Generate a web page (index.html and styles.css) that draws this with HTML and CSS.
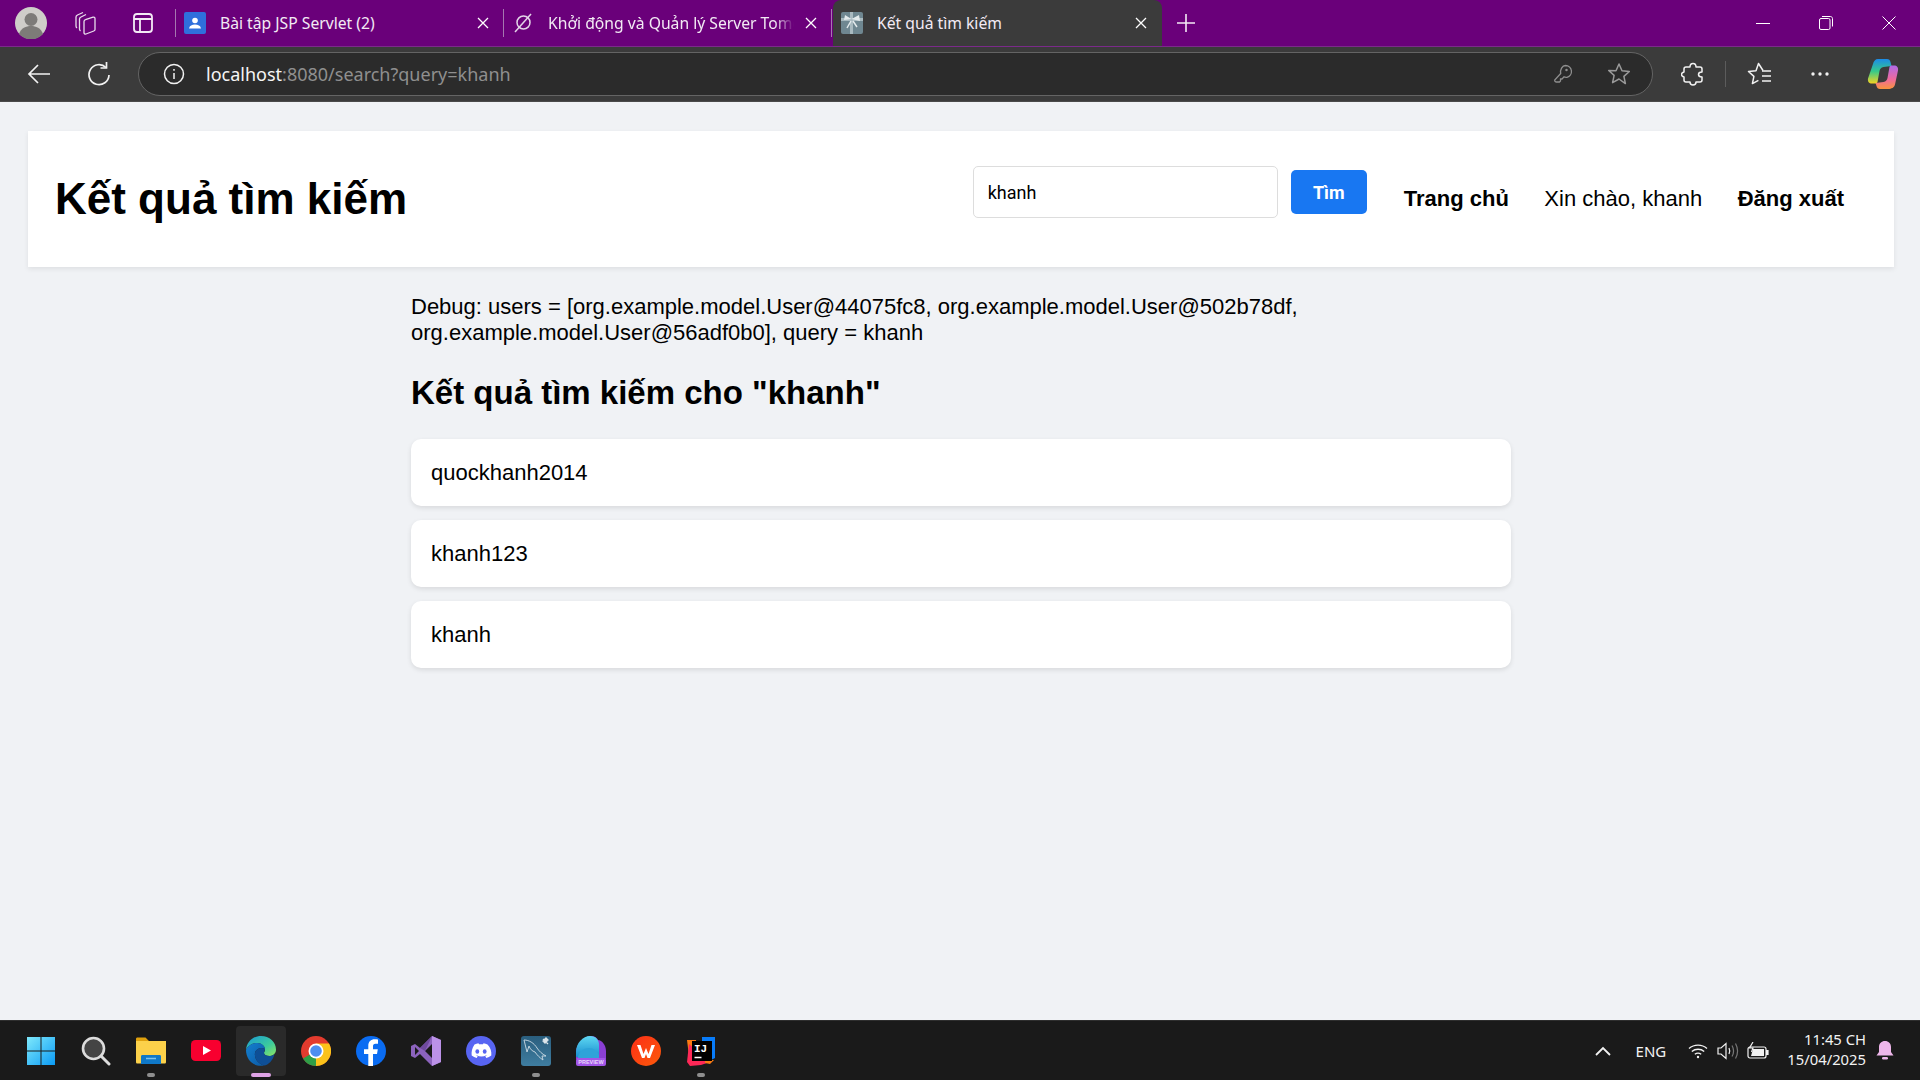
FILE: index.html
```html
<!DOCTYPE html>
<html lang="en">
<head>
    <meta charset="UTF-8">
    <meta name="viewport" content="width=device-width, initial-scale=1.0">
    <title>Kết quả tìm kiếm</title>
    <link rel="stylesheet" href="styles.css">
</head>
<body>

    <div class="tabstrip">
        <div class="avatar">
            <svg width="32" height="32" viewBox="0 0 32 32"><circle cx="16" cy="16" r="16" fill="#cfcdc9"/><circle cx="16" cy="12.500" r="6.500" fill="#7d7b78"/><path d="M4 27c2-6 7-8 12-8s10 2 12 8a16 16 0 0 1-24 0z" fill="#7d7b78"/></svg>
        </div>
        <div class="strip-icon workspaces">
            <svg width="24" height="24" viewBox="0 0 24 24" fill="none" stroke="#e9dcec" stroke-width="1.300"><path d="M10 1.500 4.500 4c-1 .5-1.500 1-1.500 2v9c0 1 .3 1.500 1 2"/><path d="M13 3.500 8 6c-1 .5-1.500 1-1.500 2v10c0 1 .4 1.500 1 2"/><path d="M11 10.500c0-1 .5-1.500 1.500-1.800l7.500-2.500c1-.3 2 .3 2 1.300v11c0 .8-.5 1.300-1.200 1.500l-7.800 3c-1 .3-2-.3-2-1.300z"/></svg>
        </div>
        <div class="strip-icon vtabs">
            <svg width="24" height="24" viewBox="0 0 24 24" fill="none" stroke="#f3e9f5" stroke-width="1.800"><rect x="3" y="3" width="18" height="18" rx="3"/><path d="M3 8h18M9 8v13"/></svg>
        </div>
        <div class="strip-divider"></div>

        <div class="tab">
            <svg class="favicon" width="22" height="22" viewBox="0 0 22 22"><rect width="22" height="22" rx="2" fill="#2f6fdc"/><circle cx="11" cy="8.500" r="2.800" fill="#fff"/><path d="M5 16.500c.5-3 3-4 6-4s5.500 1 6 4z" fill="#fff"/></svg>
            <span class="tab-title">Bài tập JSP Servlet (2)</span>
            <svg class="tab-close" width="14" height="14" viewBox="0 0 14 14"><path d="M2 2l10 10M12 2 2 12" stroke="#fff" stroke-width="1.300"/></svg>
        </div>
        <div class="tab">
            <svg class="favicon" width="22" height="22" viewBox="0 0 22 22" fill="none" stroke="#e3d5e8" stroke-width="1.500"><circle cx="11.500" cy="10.500" r="6.500"/><path d="M3 20 19 2"/></svg>
            <span class="tab-title fade">Khởi động và Quản lý Server Tomcat</span>
            <svg class="tab-close" width="14" height="14" viewBox="0 0 14 14"><path d="M2 2l10 10M12 2 2 12" stroke="#fff" stroke-width="1.300"/></svg>
        </div>
        <div class="tab active">
            <svg class="favicon" width="22" height="22" viewBox="0 0 22 22"><rect width="22" height="22" rx="2" fill="#6f8791"/><path d="M0 6h22v3H0zM9 0h3v22H9z" fill="#a9bac0"/><path d="M10.500 7 4 3l-1 5zM10.500 7 18 3l1 6z" fill="#e3eaec"/><path d="M10 9 6 16M12 9l4 6" stroke="#e3eaec" stroke-width="1.500"/></svg>
            <span class="tab-title">Kết quả tìm kiếm</span>
            <svg class="tab-close" width="14" height="14" viewBox="0 0 14 14"><path d="M2 2l10 10M12 2 2 12" stroke="#fff" stroke-width="1.300"/></svg>
        </div>
        <svg class="new-tab" width="20" height="20" viewBox="0 0 20 20"><path d="M10 1v18M1 10h18" stroke="#f3e9f5" stroke-width="1.600"/></svg>

        <div class="window-controls">
            <svg width="14" height="14" viewBox="0 0 14 14"><path d="M0 7.500h14" stroke="#fff"/></svg>
            <svg width="14" height="14" viewBox="0 0 14 14" fill="none" stroke="#fff"><rect x=".5" y="2.500" width="10.500" height="11" rx="1.500"/><path d="M3 .5h8.500c1 0 2 1 2 2v8"/></svg>
            <svg width="14" height="14" viewBox="0 0 14 14"><path d="M.5.5l13 13M13.500.5l-13 13" stroke="#fff"/></svg>
        </div>
    </div>

    <div class="toolbar">
        <svg class="back" width="24" height="24" viewBox="0 0 24 24" fill="none" stroke="#f2f2f2" stroke-width="1.700"><path d="M23 12H2M11 3l-9 9 9 9"/></svg>
        <svg class="reload" width="24" height="24" viewBox="0 0 24 24" fill="none" stroke="#f2f2f2" stroke-width="1.700"><path d="M19 5.500A10 10 0 1 0 22 13"/><path d="M19.500 0v6h-6"/></svg>
        <div class="addressbar">
            <svg class="info" width="22" height="22" viewBox="0 0 22 22" fill="none" stroke="#f2f2f2" stroke-width="1.500"><circle cx="11" cy="11" r="9.500"/><path d="M11 10v6M11 6v1.800"/></svg>
            <div class="url"><span class="host">localhost</span>:8080/search?query=khanh</div>
            <svg class="key" width="20" height="20" viewBox="0 0 20 20" fill="none" stroke="#8f8f8f" stroke-width="1.300"><path d="M12.500 1.500a6 6 0 0 1 1.500 11.800c-1 .2-2.200 0-3-.5l-2 2.200H7.500v2l-1 1h-3c-1 0-2-.8-1.800-2l6-6.500c-.8-3.500 1.500-8 4.800-8z"/><circle cx="13.500" cy="6" r=".6"/></svg>
            <svg class="star" width="24" height="24" viewBox="0 0 24 24" fill="none" stroke="#9a9a9a" stroke-width="1.500" stroke-linejoin="round"><path d="M12 2l3 6.700 7.300.8-5.400 4.900 1.500 7.200L12 17l-6.400 3.600 1.500-7.200-5.400-4.900L9 8.700z"/></svg>
        </div>
        <svg class="puzzle" width="24" height="24" viewBox="0 0 24 24" fill="none" stroke="#f2f2f2" stroke-width="1.500" stroke-linejoin="round"><path d="M9 5c0-2 1-3.500 3-3.500S15 3 15 5h4c1 0 2 1 2 2v3c-2 0-3.500 1-3.500 2.500S19 15 21 15v3c0 1-1 2-2 2h-4c0 2-1 3-3 3s-3-1-3-3H5c-1 0-2-1-2-2v-3c-2-.5-2.500-1.500-2.500-2.500S1 10.500 3 10V7c0-1 1-2 2-2z"/></svg>
        <div class="tool-divider"></div>
        <svg class="favs" width="26" height="24" viewBox="0 0 26 24" fill="none" stroke="#f2f2f2" stroke-width="1.500" stroke-linejoin="round"><path d="M16 8.500 11.500 1.500 9 8.700l-7.500.8 5.400 4.900-1.500 7.200 6-3.300"/><path d="M15 9h9M15 14h9M15 19h9"/></svg>
        <svg class="dots" width="20" height="6" viewBox="0 0 20 6"><circle cx="3" cy="3" r="1.700" fill="#f2f2f2"/><circle cx="10" cy="3" r="1.700" fill="#f2f2f2"/><circle cx="17" cy="3" r="1.700" fill="#f2f2f2"/></svg>
        <svg class="copilot" width="32" height="32" viewBox="0 0 32 32">
            <defs>
                <linearGradient id="cpA" x1="0" y1="0" x2="0" y2="1"><stop offset="0" stop-color="#1c8be8"/><stop offset=".5" stop-color="#36c98a"/><stop offset="1" stop-color="#f5d421"/></linearGradient>
                <linearGradient id="cpB" x1="0" y1="0" x2="0" y2="1"><stop offset="0" stop-color="#b06be8"/><stop offset=".6" stop-color="#f06a9a"/><stop offset="1" stop-color="#f8953c"/></linearGradient>
            </defs>
            <path d="M11 1h9c2 0 3 1 3.500 3l1 4-8 1c-2.500.5-3.500 2-4 4l-2 11c-.3 1-1 1.500-2.500 1.500H5c-3 0-4.500-2-4-5L6 6c.6-3 2.500-5 5-5z" fill="url(#cpA)"/>
            <path d="M21 31h-8c-2 0-3-1-3.500-3l-1-3 8-1c2.500-.5 3.500-2 4-4l2-11c.3-1 1.500-1.500 2.500-1.500H27c3 0 4.500 2 4 5l-3 14c-.6 3-3.500 4.500-7 4.500z" fill="url(#cpB)"/>
        </svg>
    </div>

    <div class="page">
        <div class="header">
            <h1>Kết quả tìm kiếm</h1>
            <form class="search-form" onsubmit="return false">
                <input type="text" value="khanh">
                <button>Tìm</button>
            </form>
            <nav class="nav">
                <a href="#">Trang chủ</a>
                <span>Xin chào, khanh</span>
                <a href="#">Đăng xuất</a>
            </nav>
        </div>

        <div class="container">
            <p class="debug">Debug: users = [org.example.model.User@44075fc8, org.example.model.User@502b78df, org.example.model.User@56adf0b0], query = khanh</p>
            <h2>Kết quả tìm kiếm cho "khanh"</h2>
            <div class="user-card">quockhanh2014</div>
            <div class="user-card">khanh123</div>
            <div class="user-card">khanh</div>
        </div>
    </div>

    <div class="taskbar">
        <div class="task">
            <svg width="30" height="30" viewBox="0 0 30 30"><defs><linearGradient id="win" x1="0" y1="0" x2="1" y2="1"><stop offset="0" stop-color="#7fe9fb"/><stop offset="1" stop-color="#0b9bf5"/></linearGradient></defs><path d="M1 1h13.500v13.500H1zM15.500 1H29v13.500H15.500zM1 15.500h13.500V29H1zM15.500 15.500H29V29H15.500z" fill="url(#win)"/></svg>
        </div>
        <div class="task">
            <svg width="30" height="30" viewBox="0 0 30 30" fill="none"><circle cx="12.500" cy="12.500" r="10.500" fill="#444" stroke="#dcdcdc" stroke-width="2.600"/><path d="M20 20l8 8" stroke="#dcdcdc" stroke-width="3" stroke-linecap="round"/></svg>
        </div>
        <div class="task running">
            <svg width="30" height="30" viewBox="0 0 30 30"><path d="M0 3c0-1 .6-1.500 1.500-1.500h8L13 5h15.500v3H0z" fill="#e0a10d"/><path d="M0 5h30v21c0 1-.6 1.500-1.500 1.500h-27C.6 27.500 0 27 0 26z" fill="#fcd14a"/><path d="M5 20.500c0-1 .6-1.500 1.500-1.500h17c1 0 1.500.5 1.500 1.500V28H5z" fill="#0f78c8"/><path d="M10 22.500h10" stroke="#7cc4f0" stroke-width="1.500"/></svg>
        </div>
        <div class="task">
            <svg width="30" height="22" viewBox="0 0 30 22"><rect width="30" height="21" rx="4.500" fill="#f8002f"/><path d="M12 6v9l8-4.500z" fill="#fff"/></svg>
        </div>
        <div class="task active">
            <svg width="30" height="30" viewBox="0 0 30 30">
                <defs>
                    <linearGradient id="edgeA" x1="0" y1="0" x2="1" y2="1"><stop offset="0" stop-color="#1a9ad6"/><stop offset=".6" stop-color="#3ccb9c"/><stop offset="1" stop-color="#8ee563"/></linearGradient>
                    <linearGradient id="edgeB" x1="0" y1="0" x2="1" y2="1"><stop offset="0" stop-color="#1480d0"/><stop offset="1" stop-color="#0c59a4"/></linearGradient>
                </defs>
                <path d="M15 0c8.500 0 15 6 15 13.500 0 4-3 6.500-6.500 6.500-3 0-5.500-1-5.500-3 0-1 1-1.500 1-3.500C19 10 15.500 7 11.500 7 6 7 1.500 10.500 0 14 .5 6 7 0 15 0z" fill="url(#edgeA)"/>
                <path d="M0 14c1.500-3.500 6-7 11.500-7C15.500 7 19 10 19 13c-3-2-9-1-10 4-1 5 3 11 9 12.500C8 31.500 0 24 0 14z" fill="url(#edgeB)"/>
                <path d="M9 17c1-5 7-6 10-4 0 1-1 2.500-1 4 0 2 2.500 3 5.500 3 2.500 0 4-1 5-2-1.500 6.500-6 11-10.500 11.500C12 28 8 22 9 17z" fill="#0e4f96"/>
            </svg>
        </div>
        <div class="task">
            <svg width="30" height="30" viewBox="0 0 30 30"><circle cx="15" cy="15" r="15" fill="#e33b2e"/><path d="M15 15 2 22.500A15 15 0 0 0 15 30z" fill="#2f9e47"/><path d="M15 15 15 30A15 15 0 0 0 28 7.500L15 7.500z" fill="#fbc21a"/><circle cx="15" cy="15" r="7.500" fill="#fff"/><circle cx="15" cy="15" r="5.800" fill="#4d8ef0"/></svg>
        </div>
        <div class="task">
            <svg width="30" height="30" viewBox="0 0 30 30"><circle cx="15" cy="15" r="15" fill="#0a6cf2"/><path d="M17 30V18h4l.8-4.800H17v-3c0-1.400.6-2.400 2.500-2.400H22V3.500C21 3.300 19.800 3.200 18.700 3.200c-3.800 0-6.400 2.300-6.400 6.500v3.500H8V18h4.300v12z" fill="#fff"/></svg>
        </div>
        <div class="task">
            <svg width="30" height="30" viewBox="0 0 30 30"><path d="M21 0 30 4v22l-9 4L9 18l-5 4-4-2V10l4-2 5 4z" fill="#8c63bd"/><path d="M21 0 30 4v22l-9 4z" fill="#bc92e8"/><path d="M21 8v14l-7-7z" fill="#1a1a1a"/><path d="M4 11v8l4-4z" fill="#1a1a1a"/><path d="M21 0 9 12l5 3z" fill="#6f4a9e"/></svg>
        </div>
        <div class="task">
            <svg width="30" height="30" viewBox="0 0 30 30"><circle cx="15" cy="15" r="15" fill="#5865f2"/><path d="M21.500 8.500a16 16 0 0 0-4-1.200l-.5 1a15 15 0 0 0-4 0l-.5-1a16 16 0 0 0-4 1.200C6 12.200 5.300 16 5.700 19.500a16 16 0 0 0 5 2.500l1-1.700-1.500-.8.400-.3a11 11 0 0 0 9.800 0l.4.300-1.500.8 1 1.700a16 16 0 0 0 5-2.500c.4-4-.6-7.700-3.800-11z" fill="#fff"/><ellipse cx="11.300" cy="15.500" rx="1.900" ry="2.200" fill="#5865f2"/><ellipse cx="18.700" cy="15.500" rx="1.900" ry="2.200" fill="#5865f2"/></svg>
        </div>
        <div class="task running">
            <svg width="30" height="30" viewBox="0 0 30 30"><defs><linearGradient id="sql" x1="0" y1="0" x2="0" y2="1"><stop offset="0" stop-color="#2a5e7e"/><stop offset="1" stop-color="#3f7da0"/></linearGradient></defs><rect width="30" height="30" rx="3" fill="url(#sql)"/><path d="M3 4c5 0 10 3 13 8 2 3 5 6 9 8l-4 0 1 4c-3-2-6-5-8-8-3-1-5-3-6-6l-2 6C5 12 4 8 3 4z" fill="none" stroke="#cfdde5" stroke-width=".9"/><path d="M22 3l5 5M25 2l2 2-3 3-2-2z" stroke="#dbe5ea" stroke-width="1.300" fill="#dbe5ea"/></svg>
        </div>
        <div class="task">
            <svg width="30" height="30" viewBox="0 0 30 30"><defs><linearGradient id="azd" x1="0" y1="0" x2="0" y2="1"><stop offset="0" stop-color="#5ed8f2"/><stop offset="1" stop-color="#1a8fd0"/></linearGradient></defs><path d="M15 0c4 0 6 2 7 4 4 .5 8 5 8 11v8H0v-7C0 8 8 0 15 0z" fill="#8a3fd4"/><path d="M14 0c6 0 9 4 9 9v12H0v-5C0 7 7 0 14 0z" fill="url(#azd)"/><path d="M2 21c1-6 6-9 11-9s8 3 10 7v3H2z" fill="#2ea3d9"/><rect y="22" width="30" height="8" rx="2" fill="#a256e8"/><text x="15" y="28.300" class="preview-label">PREVIEW</text></svg>
        </div>
        <div class="task">
            <svg width="30" height="30" viewBox="0 0 30 30"><defs><linearGradient id="wps" x1="0" y1="0" x2="1" y2="1"><stop offset="0" stop-color="#fb2f17"/><stop offset="1" stop-color="#fd5a0a"/></linearGradient></defs><circle cx="15" cy="15" r="15" fill="url(#wps)"/><path d="M6 9h3.500l3 9 2.500-6 2.500 6 3-9H24l-5 13h-2.500L15 18l-1.500 4H11z" fill="#fff"/></svg>
        </div>
        <div class="task running">
            <svg width="30" height="30" viewBox="0 0 30 30"><path d="M1 4h9v6L4 28z" fill="#f97a12"/><path d="M16 1h13v21l-4 2H16z" fill="#087cfa"/><path d="M3 8 1 26l3 4 11-1 9-3z" fill="#fe2857"/><path d="M19 24h9l-4 4-5-1z" fill="#f97a12"/><rect x="6" y="5" width="20" height="20" fill="#000"/><text x="8" y="15.500" class="ij-label">IJ</text><path d="M8.500 21.500h7" stroke="#fff" stroke-width="1.500"/></svg>
        </div>

        <div class="tray">
            <svg class="chevron" width="16" height="10" viewBox="0 0 16 10" fill="none" stroke="#f2f2f2" stroke-width="1.800"><path d="M1 9l7-7 7 7"/></svg>
            <span class="lang">ENG</span>
            <svg class="wifi" width="20" height="16" viewBox="0 0 20 16" fill="none" stroke="#f2f2f2" stroke-width="1.300"><path d="M1 5.500c5-4.500 13-4.500 18 0M3.800 8.500c3.500-3 9-3 12.400 0M6.800 11.300c2-1.500 4.400-1.500 6.400 0"/><circle cx="10" cy="14" r="1.200" fill="#f2f2f2" stroke="none"/></svg>
            <svg class="volume" width="22" height="18" viewBox="0 0 22 18" fill="none" stroke="#f2f2f2" stroke-width="1.200"><path d="M1 6h3l5-4.500v15L4 12H1z"/><path d="M12 6c1 2 1 4 0 6"/><path d="M15 3.500c2 3.500 2 7.500 0 11M18.500 1.500c2.500 4.500 2.500 10.500 0 15" stroke="#777"/></svg>
            <svg class="battery" width="22" height="18" viewBox="0 0 22 18" fill="none" stroke="#f2f2f2" stroke-width="1.200"><rect x="1" y="5" width="18" height="11" rx="2"/><path d="M19 8.500h2v4h-2" fill="#f2f2f2"/><path d="M6 7h11v7H4z" fill="#f2f2f2" stroke="none"/><path d="M6 0 2.500 6H6l-1.500 4" stroke="#f2f2f2"/></svg>
            <div class="clock">
                <span>11:45 CH</span>
                <span>15/04/2025</span>
            </div>
            <svg class="bell" width="18" height="20" viewBox="0 0 18 20"><path d="M9 0c3.500 0 6 2.500 6 6v5l2.500 3.500h-17L3 11V6c0-3.500 2.500-6 6-6z" fill="#eeb6ea"/><rect x="6" y="16" width="6" height="2.500" rx="1.200" fill="#eeb6ea"/></svg>
        </div>
    </div>

</body>
</html>
```

FILE: styles.css
```css
* {
    box-sizing: border-box;
}
html, body {
    height: 100%;
}
body {
    margin: 0;
    display: flex;
    flex-direction: column;
    height: 1080px;
    overflow: hidden;
    font-family: "Liberation Sans", Arial, sans-serif;
    background-color: #f0f2f5;
    color: #000;
}

/* browser tab strip */
.tabstrip {
    display: flex;
    align-items: center;
    height: 46px;
    flex-shrink: 0;
    background-color: #6a007a;
    font-family: "Noto Sans", sans-serif;
}
.avatar {
    display: flex;
    margin-left: 15px;
}
.strip-icon {
    display: flex;
}
.workspaces {
    margin-left: 26px;
}
.vtabs {
    margin-left: 34px;
}
.strip-divider {
    width: 1px;
    height: 28px;
    margin-left: 20px;
    background-color: #a577b0;
}
.tab {
    display: flex;
    align-items: center;
    width: 328px;
    height: 28px;
    padding: 0 13px 0 8px;
    border-right: 1px solid #a577b0;
    color: #f2eaf4;
}
.tab.active {
    width: 329px;
    height: 46px;
    margin-left: 1px;
    padding: 0 14px 0 8px;
    border-right: none;
    border-radius: 8px 8px 0 0;
    background-color: #3b3b3b;
}
.favicon {
    flex-shrink: 0;
}
.tab-title {
    flex: 1;
    margin: 0 10px 0 14px;
    overflow: hidden;
    white-space: nowrap;
    font-size: 15.700px;
}
.tab-title.fade {
    -webkit-mask-image: linear-gradient(to right, #000 92%, transparent);
    mask-image: linear-gradient(to right, #000 92%, transparent);
}
.tab-close {
    flex-shrink: 0;
}
.new-tab {
    margin-left: 14px;
}
.window-controls {
    display: flex;
    gap: 49px;
    margin-left: auto;
    margin-right: 24px;
}

/* address bar row */
.toolbar {
    display: flex;
    align-items: center;
    height: 56px;
    flex-shrink: 0;
    background-color: #3b3b3b;
    border-top: 1px solid #7b2a8a;
    border-bottom: 1px solid #4a4a4a;
}
.back {
    margin-left: 27px;
}
.reload {
    margin-left: 36px;
}
.addressbar {
    display: flex;
    align-items: center;
    width: 1515px;
    height: 44px;
    margin-left: 27px;
    padding-left: 24px;
    background-color: #2b2b2b;
    border: 1px solid #646464;
    border-radius: 22px;
}
.url {
    margin-left: 21px;
    font-family: "Noto Sans", sans-serif;
    font-size: 18px;
    color: #8f8f8f;
}
.host {
    color: #f5f5f5;
}
.key {
    margin-left: auto;
    margin-right: 1px;
}
.star {
    margin-left: 33px;
    margin-right: 21px;
}
.puzzle {
    margin-left: 28px;
}
.tool-divider {
    width: 1px;
    height: 26px;
    margin-left: 20px;
    background-color: #5c5c5c;
}
.favs {
    margin-left: 21px;
}
.dots {
    margin-left: 37px;
}
.copilot {
    margin-left: 37px;
}

/* page content */
.page {
    flex: 1;
    padding: 29px 26px 0 28px;
}
.header {
    display: flex;
    align-items: center;
    height: 136px;
    padding: 0 50px 0 27px;
    background-color: white;
    box-shadow: 0 2px 5px rgba(0, 0, 0, 0.08);
}
h1 {
    margin: 0;
    font-size: 44px;
    font-weight: bold;
}
.search-form {
    display: flex;
    align-items: center;
    gap: 13px;
    margin-left: auto;
    margin-bottom: 14px;
}
.search-form input {
    width: 305px;
    height: 52px;
    padding: 0 14px;
    border: 1px solid #ddd;
    border-radius: 5px;
    outline: none;
    font-family: Roboto, sans-serif;
    font-size: 18px;
    color: #000;
}
.search-form button {
    width: 76px;
    height: 44px;
    padding: 0;
    border: none;
    border-radius: 5px;
    background-color: #1877f2;
    color: white;
    font-family: Roboto, sans-serif;
    font-size: 18px;
    font-weight: bold;
}
.nav {
    display: flex;
    align-items: center;
    gap: 35.500px;
    margin-left: 37px;
    font-size: 22px;
}
.nav a {
    color: #000;
    font-weight: bold;
    text-decoration: none;
}
.container {
    width: 1100px;
    margin: 27px 0 0 383px;
}
.debug {
    margin: 0;
    font-size: 22px;
    line-height: 26px;
}
h2 {
    margin: 26px 0 0;
    font-size: 33px;
    line-height: 42px;
}
.user-card {
    display: flex;
    align-items: center;
    height: 67px;
    margin-top: 14px;
    padding: 0 20px;
    background-color: white;
    border-radius: 10px;
    box-shadow: 0 2px 5px rgba(0, 0, 0, 0.1);
    font-size: 22px;
}
h2 + .user-card {
    margin-top: 25px;
}

/* windows taskbar */
.taskbar {
    display: flex;
    align-items: center;
    height: 60px;
    flex-shrink: 0;
    padding-left: 13px;
    background-color: #1a1a1a;
    border-top: 1px solid #2e2e2e;
}
.task {
    position: relative;
    display: flex;
    align-items: center;
    justify-content: center;
    width: 55px;
    height: 50px;
}
.task.active {
    width: 50px;
    margin: 0 2.500px;
    background-color: #2a2a2a;
    border-radius: 4px;
}
.task.running::after,
.task.active::after {
    content: "";
    position: absolute;
    left: 50%;
    bottom: -1px;
    width: 8px;
    height: 4px;
    margin-left: -4px;
    border-radius: 2px;
    background-color: #8f8f8f;
}
.task.active::after {
    width: 20px;
    margin-left: -10px;
    background-color: #dfa3e6;
}
.preview-label {
    font-family: "Liberation Sans", sans-serif;
    font-size: 5.500px;
    font-weight: bold;
    fill: #e8d8f8;
    text-anchor: middle;
}
.ij-label {
    font-family: "Liberation Mono", monospace;
    font-size: 11px;
    font-weight: bold;
    fill: #fff;
}
.tray {
    display: flex;
    align-items: center;
    margin-left: auto;
    color: #f2f2f2;
    font-family: "Noto Sans", sans-serif;
}
.lang {
    margin-left: 25px;
    font-size: 15px;
}
.wifi {
    margin-left: 22px;
}
.volume {
    margin-left: 9px;
}
.battery {
    margin-left: 8px;
}
.clock {
    display: flex;
    flex-direction: column;
    align-items: flex-end;
    margin-left: 18px;
    margin-bottom: 3px;
    font-size: 14.800px;
    line-height: 20px;
}
.bell {
    margin: 0 26px 0 10px;
}
```
